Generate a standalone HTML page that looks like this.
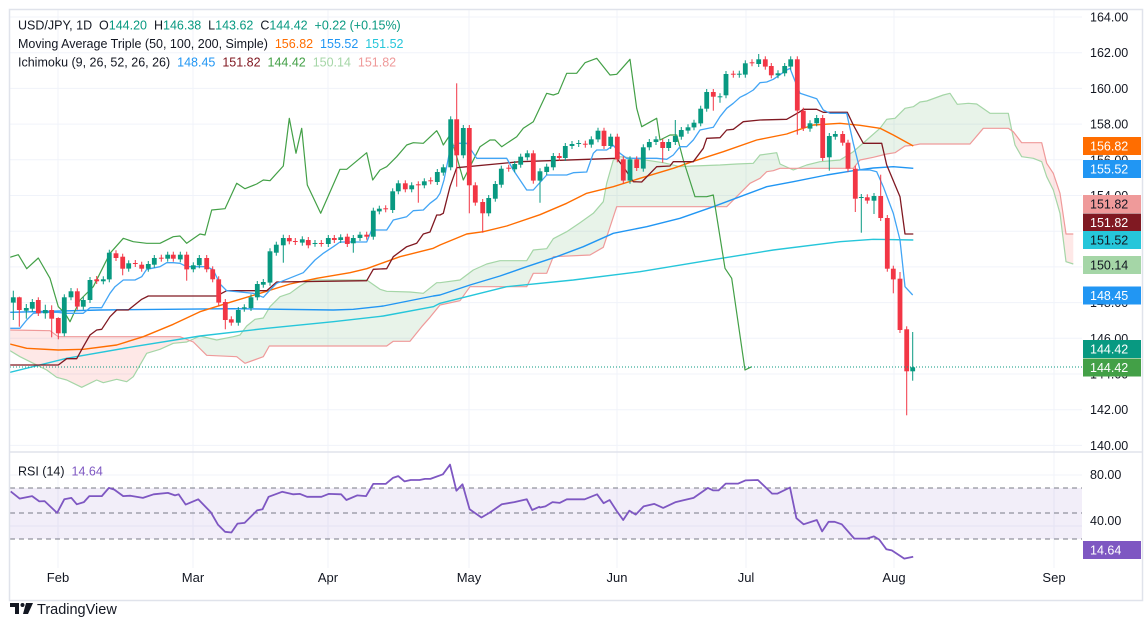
<!DOCTYPE html>
<html><head><meta charset="utf-8"><style>
html,body{margin:0;padding:0;background:#fff;width:1148px;height:627px;overflow:hidden;font-family:"Liberation Sans",sans-serif;}
svg{display:block}
text{white-space:pre}
</style></head><body>
<svg id="s" width="1148" height="627" xmlns="http://www.w3.org/2000/svg" font-family="Liberation Sans, sans-serif"></svg>
<script>
const S=document.getElementById('s');
let h='';
const z3=(x,y)=>[x/3,80+y/3], z4=(x,y)=>[440+x/3,40+y/3], z5=(x,y)=>[880+x/3,80+y/3], z6=(x,y)=>[x/2.8,445+y/2.8], z7=(x,y)=>[540+x/2.8,445+y/2.8];
function pts(f,a,lo=-1e9,hi=1e9){const r=[];for(let i=0;i<a.length;i+=2){const p=f(a[i],a[i+1]);if(p[0]>=lo&&p[0]<hi)r.push(p);}return r;}
const str=p=>p.map(q=>q[0].toFixed(1)+','+q[1].toFixed(1)).join(' ');
function line(p,c,w=1.3,extra=''){h+=`<polyline points="${str(p)}" fill="none" stroke="${c}" stroke-width="${w}" stroke-linejoin="round" ${extra}/>`;}
const py=p=>17+(164-p)*17.85;
h+='<rect x="0" y="0" width="1148" height="627" fill="#fff"/>';
for(let p=140;p<=164;p+=2){h+=`<line x1="10" x2="1082" y1="${py(p)}" y2="${py(p)}" stroke="#f0f3fa" stroke-width="1"/>`;}
h+=`<line x1="10" x2="1082" y1="475" y2="475" stroke="#f0f3fa"/><line x1="10" x2="1082" y1="526" y2="526" stroke="#f0f3fa"/>`;
const months=[[58,'Feb'],[193,'Mar'],[328,'Apr'],[469,'May'],[617,'Jun'],[746,'Jul'],[894,'Aug'],[1054,'Sep']];
months.forEach(m=>{h+=`<line x1="${m[0]}" x2="${m[0]}" y1="10" y2="568" stroke="#f0f3fa"/>`;});
h+='<clipPath id="cp"><rect x="10" y="10" width="1072" height="442"/></clipPath><g clip-path="url(#cp)">';
const A=pts(z3,[30,812,60,830,100,850,140,870,170,892,200,900,245,922,290,900,310,908,350,898,380,905,400,890,440,820,480,808,520,790,560,786,600,768,650,780,700,770,720,765,740,738,765,718,790,714,810,680,840,650,870,640,900,618,930,600,1100,600,1140,628,1160,634,1230,636,1270,640,1310,608],0,440)
 .concat(pts(z4,[0,728,60,720,100,690,140,672,180,662,260,662,280,630,320,626,340,596,380,575,420,548,460,520,490,485,500,430,520,360,540,350,560,352,670,368,720,380,760,378,840,375,890,372,940,370,960,345,1010,338,1020,372,1060,390,1100,375,1140,365,1200,360,1240,335,1280,300,1320,265,1340,238,1390,205],440,895))
 .concat(pts(z5,[45,115,75,85,100,80,120,66,140,63,190,45,210,40,232,73,265,70,290,72,330,100,385,100,395,150,405,195,425,230,460,235,485,245,500,290,520,330,540,400,558,545,580,552],895));
const B=pts(z3,[30,750,150,752,175,770,540,770,580,786,620,826,710,830,735,850,790,830,808,798,1160,798,1180,784,1230,784,1265,740,1290,712],0,440)
 .concat(pts(z4,[0,795,60,782,90,740,260,740,280,700,320,700,340,650,450,645,490,622,530,500,860,500,900,460,930,430,960,415,980,395,1000,392,1020,385,1240,385,1260,360,1300,352,1340,342,1380,325],440,895))
 .concat(pts(z5,[45,218,75,198,100,196,120,192,270,192,310,145,385,145,400,155,425,188,485,188,500,250,520,280,540,340,558,462,580,462],895));
const poly=str(A.concat(B.slice().reverse()));
h+=`<clipPath id="cg"><rect x="195" y="0" width="817" height="627"/></clipPath><clipPath id="cr"><rect x="0" y="0" width="195" height="627"/><rect x="1012" y="0" width="200" height="627"/></clipPath>`;
h+=`<polygon points="${poly}" fill="rgba(67,160,71,0.12)" clip-path="url(#cg)"/><polygon points="${poly}" fill="rgba(244,67,54,0.12)" clip-path="url(#cr)"/>`;
line(A,'#a5d6a7',1.2);line(B,'#ef9a9a',1.2);
line(pts(z3,[30,877,200,835,400,800,600,768,800,745,1000,725,1150,708,1300,680],0,440).concat(pts(z4,[0,790,200,740,400,720,600,695,800,662,1000,630,1200,605,1300,598,1420,600])),'#26c6da',1.4);
line(pts(z3,[30,697,300,690,700,686,1000,690,1060,688,1150,678,1300,648],0,440).concat(pts(z4,[0,765,90,735,180,708,260,680,350,650,430,620,520,580,620,560,720,535,820,500,900,470,980,440,1060,425,1160,405,1240,392,1300,384,1360,380,1420,385])),'#2196f3',1.4);
line(pts(z3,[30,792,80,805,175,810,250,808,350,795,430,770,520,733,600,695,700,664,780,640,870,612,950,595,1050,578,1100,566,1150,548,1200,530,1300,505],0,440).concat(pts(z4,[0,615,80,582,130,575,200,558,300,524,380,490,440,460,520,440,600,415,700,385,760,364,850,335,950,300,1040,282,1080,268,1120,255,1200,250,1260,256,1320,265,1360,285,1420,318])),'#ff6d00',1.4);
line(pts(z3,[30,532,55,524,80,566,115,534,150,595,175,680,195,700,210,725,240,660,280,620,310,560,330,520,370,475,400,485,440,490,480,490,520,470,540,468,560,490,600,462,615,465,635,390,675,386,710,310,735,326,770,312,790,300,810,302,850,258,868,115,888,220,905,145,922,315,962,400,1020,268,1040,268,1100,218,1118,300,1140,270,1160,260,1190,230,1220,195,1240,188,1270,190,1310,152,1330,195],0,440).concat(pts(z4,[0,290,10,315,30,285,50,350,70,420,90,380,120,320,150,300,165,300,185,320,230,290,250,265,280,245,320,160,340,165,355,160,380,100,410,100,435,68,470,55,510,105,530,103,570,58,590,205,605,260,650,235,660,300,690,285,710,285,730,360,765,470,800,470,820,465,855,685,875,715,915,990,935,980])),'#43a047',1.2);
line(pts(z3,[30,855,175,855,200,836,230,836,250,800,270,765,290,750,305,748,330,710,350,690,385,690,425,658,445,648,650,648,665,640,680,632,800,632,830,606,1100,602,1120,568,1160,566,1180,530,1220,500,1250,490,1270,462,1290,456,1310,405,1330,400],0,440).concat(pts(z4,[0,525,10,520,30,440,50,383,240,365,530,355,550,380,580,425,605,426,650,380,690,378,700,365,760,365,790,325,800,295,840,293,860,270,880,268,910,245,960,240,1040,238,1080,215,1090,208,1130,208,1150,217,1222,217,1240,255,1270,310,1325,310,1340,375,1380,470,1395,582,1420,582])),'#801922',1.3);
line(pts(z3,[30,745,60,745,80,720,100,700,130,697,175,697,195,700,250,700,270,683,305,683,330,640,345,620,370,600,405,600,425,590,440,568,480,560,500,548,520,548,540,550,560,560,620,560,640,570,660,612,680,632,720,636,760,640,790,652,810,630,830,610,880,590,910,578,945,540,970,520,1000,500,1020,486,1100,486,1115,450,1160,450,1180,420,1220,410,1240,392,1270,390,1290,370,1310,355],0,440).concat(pts(z4,[0,460,12,420,30,330,50,310,80,310,110,355,200,355,220,390,240,420,260,450,280,450,320,405,380,405,400,398,440,396,460,340,470,330,500,330,520,316,540,340,560,355,650,355,680,358,700,345,720,320,740,320,760,300,780,270,820,262,840,230,860,205,880,190,900,172,920,162,940,150,960,128,980,126,1000,118,1040,90,1050,85,1060,110,1080,160,1130,176,1150,210,1170,220,1220,220,1240,310,1260,390,1290,390,1310,395,1330,440,1360,520,1380,600,1395,740,1418,765])),'#42a5f5',1.3);
const C3=[[40,652,668,1,632,720],[58,652,690,0,650,740],[79,684,692,1,672,716],[97,666,686,1],[115,660,700,0,652,708],[136,690,700,1,674,716],[155,690,716,0,676,772],[175,714,760,0,712,778],[193,652,760,1],[213,634,652,1,624],[232,634,680,0],[250,660,680,1],[270,600,660,1],[290,598,604,0,588,612],[310,598,604,1],[328,518,598,1],[348,520,534,0],[368,530,566,0,0,586],[386,550,566,1],[406,549,552,0],[425,554,566,0],[445,552,566,1],[463,534,554,1],[484,533,536,0],[503,524,536,1],[520,524,536,0],[541,524,538,1],[560,524,568,0,0,602],[580,556,568,1],[598,534,556,1],[620,534,568,0],[638,568,598,0],[656,598,668,0],[676,666,720,0,0,748],[694,718,728,0],[715,690,728,1],[733,682,686,1],[753,652,684,1],[772,612,652,1],[790,606,614,1],[810,514,608,1],[829,494,518,1],[850,474,496,1,464,548],[868,474,484,0],[886,483,486,0],[907,478,488,1],[925,480,496,0],[945,489,491,1],[964,489,491,0],[985,474,492,1],[1003,474,480,0],[1022,472,480,1],[1042,470,492,0],[1060,474,490,1,0,518],[1080,464,474,1],[1100,464,470,0],[1120,392,470,1],[1138,386,394,1],[1157,385,388,0],[1178,334,390,1],[1195,310,334,1],[1216,310,328,0],[1235,316,328,1],[1255,313,316,0,0,368],[1273,304,316,1],[1292,301,304,0],[1312,276,306,1],[1330,262,278,1],[1352,118,262,1],[1370,118,226,0,10,320],[1390,144,226,1]];
const C4=[[88,264,436,0,0,520],[106,436,488,0],[128,486,520,0,0,578],[146,474,520,1],[166,432,476,1],[184,386,434,1],[206,383,386,0],[224,372,388,1],[242,350,374,1],[262,340,352,1],[280,340,422,0],[300,394,422,1,0,488],[320,380,396,1],[340,348,382,1],[358,348,354,0],[376,318,354,1],[396,312,318,1],[416,309,312,1],[436,311,314,0],[454,298,314,1],[474,272,298,1],[492,272,318,0],[512,290,318,1],[532,290,358,0],[550,358,422,0],[570,358,422,1],[590,358,384,0],[610,322,386,1],[628,306,322,1],[648,298,306,1],[668,306,324,0,0,368],[686,306,324,1],[706,288,306,1,240],[724,270,290,1],[744,262,272,1],[762,248,262,1],[782,206,250,1],[800,156,206,1],[820,156,170,0,0,212],[840,169,172,1,160,188],[858,102,166,1],[880,101,104,0],[898,101,104,1],[916,70,104,1],[936,67,70,0],[956,58,72,1,42],[976,58,80,0],[994,78,106,0],[1014,100,106,1],[1034,78,100,1],[1052,58,80,1],[1072,58,212,0,0,284],[1090,212,264,0],[1110,250,266,1],[1130,234,250,1],[1148,234,354,0],[1168,288,352,1,0,392],[1186,282,290,1],[1208,282,308,0],[1224,308,386,0],[1246,386,476,0,0,516],[1264,471,474,1,0,578],[1282,472,482,0],[1302,468,482,1,0,522],[1322,468,534,0,404],[1342,534,686,0],[1360,686,718,0,0,760],[1380,716,870,0,696],[1400,868,994,0,0,1126],[1418,982,994,1,876,1022]];
function cand(f,c){const a=f(c[0],c[1]),b=f(c[0],c[2]);const col=c[3]?'#089981':'#f23645';
 const wt=c[4]?f(0,c[4])[1]:a[1]-3, wb=c[5]?f(0,c[5])[1]:b[1]+3;
 h+=`<line x1="${a[0].toFixed(1)}" x2="${a[0].toFixed(1)}" y1="${wt.toFixed(1)}" y2="${wb.toFixed(1)}" stroke="${col}" stroke-width="1"/>`;
 h+=`<rect x="${(a[0]-2.4).toFixed(1)}" y="${a[1].toFixed(1)}" width="4.8" height="${Math.max(1,b[1]-a[1]).toFixed(1)}" fill="${col}"/>`;}
C3.forEach(c=>cand(z3,c));C4.forEach(c=>cand(z4,c));
h+='</g>';
h+=`<line x1="10" x2="1082" y1="367" y2="367" stroke="#089981" stroke-width="1" stroke-dasharray="1,2"/>`;
h+=`<rect x="10" y="488" width="1072" height="51" fill="rgba(126,87,194,0.1)"/>`;
[488,513,539].forEach(y=>{h+=`<line x1="10" x2="1082" y1="${y}" y2="${y}" stroke="#787b86" stroke-dasharray="5,4" stroke-width="1"/>`;});
line(pts(z6,[30,130,55,150,90,143,110,158,125,157,160,190,180,152,200,148,215,166,235,160,250,143,285,143,305,120,320,125,345,143,365,142,400,148,430,138,470,134,490,141,500,138,520,167,555,152,590,188,610,223,630,243,648,245,665,220,685,218,720,183,735,180,752,145,790,131,820,138,840,137,860,145,900,145,920,137,955,138,970,154,1000,141,1025,143,1045,109,1080,109,1100,92,1115,87,1133,102,1150,98,1175,98,1190,95,1205,95,1240,82,1260,55,1278,128,1295,110,1315,180,1348,203,1370,190,1405,166,1440,160,1475,152,1490,182,1510,173],0,540).concat(pts(z7,[0,175,15,172,35,160,55,162,75,152,125,152,160,138,178,163,195,154,215,185,233,210,250,184,268,195,290,172,320,165,345,176,380,160,400,155,430,148,470,120,485,127,500,127,520,108,555,108,575,99,610,98,650,136,665,136,700,119,718,205,738,222,775,210,790,242,808,215,825,215,845,222,880,262,915,262,935,256,950,265,970,292,985,295,1020,318,1045,313])),'#7e57c2',1.8);
h+=`<rect x="9.5" y="9.5" width="1133" height="591" fill="none" stroke="#e0e3eb" stroke-width="1.5"/>`;
h+=`<line x1="10" x2="1142" y1="452" y2="452" stroke="#e0e3eb" stroke-width="1.5"/>`;
for(let p=140;p<=164;p+=2){h+=`<text x="1090" y="${py(p)+4.5}" font-size="12.5" fill="#131722">${p.toFixed(2)}</text>`;}
h+=`<text x="1090" y="479" font-size="12.5" fill="#131722">80.00</text><text x="1090" y="525" font-size="12.5" fill="#131722">40.00</text>`;
months.forEach(m=>{h+=`<text x="${m[0]}" y="582" font-size="13" fill="#131722" text-anchor="middle">${m[1]}</text>`;});
const L=[[146,'#ff6d00','#fff','156.82'],[169,'#2196f3','#fff','155.52'],[204,'#ef9a9a','#131722','151.82'],[222.5,'#801922','#fff','151.82'],[240,'#26c6da','#131722','151.52'],[265,'#a5d6a7','#131722','150.14'],[295.5,'#2196f3','#fff','148.45'],[349,'#089981','#fff','144.42'],[367.5,'#43a047','#fff','144.42'],[550,'#7e57c2','#fff','14.64']];
L.forEach(l=>{h+=`<rect x="1083" y="${l[0]-9}" width="58" height="18" fill="${l[1]}"/><text x="1090" y="${l[0]+4.5}" font-size="12.5" fill="${l[2]}">${l[3]}</text>`;});
h+=`<text x="18" y="29.5" font-size="12.5" fill="#131722" xml:space="preserve">USD/JPY, 1D  O<tspan fill="#089981">144.20</tspan>  H<tspan fill="#089981">146.38</tspan>  L<tspan fill="#089981">143.62</tspan>  C<tspan fill="#089981">144.42</tspan>  <tspan fill="#089981">+0.22 (+0.15%)</tspan></text>`;
h+=`<text x="18" y="48" font-size="12.5" fill="#131722" xml:space="preserve">Moving Average Triple (50, 100, 200, Simple)  <tspan fill="#ff6d00">156.82</tspan>  <tspan fill="#2196f3">155.52</tspan>  <tspan fill="#26c6da">151.52</tspan></text>`;
h+=`<text x="18" y="66.5" font-size="12.5" fill="#131722" xml:space="preserve">Ichimoku (9, 26, 52, 26, 26)  <tspan fill="#2196f3">148.45</tspan>  <tspan fill="#801922">151.82</tspan>  <tspan fill="#43a047">144.42</tspan>  <tspan fill="#a5d6a7">150.14</tspan>  <tspan fill="#ef9a9a">151.82</tspan></text>`;
h+=`<text x="18" y="475.5" font-size="12.5" fill="#131722" xml:space="preserve">RSI (14)  <tspan fill="#7e57c2">14.64</tspan></text>`;
h+=`<path d="M10 603h9v11h-4v-7h-5z" fill="#131722"/><circle cx="22.5" cy="605" r="2" fill="#131722"/><path d="M26 603h7l-5 11h-5z" fill="#131722"/>`;
h+=`<text x="37" y="614" font-size="14.5" fill="#131722">TradingView</text>`;
S.innerHTML=h;
</script>
</body></html>
